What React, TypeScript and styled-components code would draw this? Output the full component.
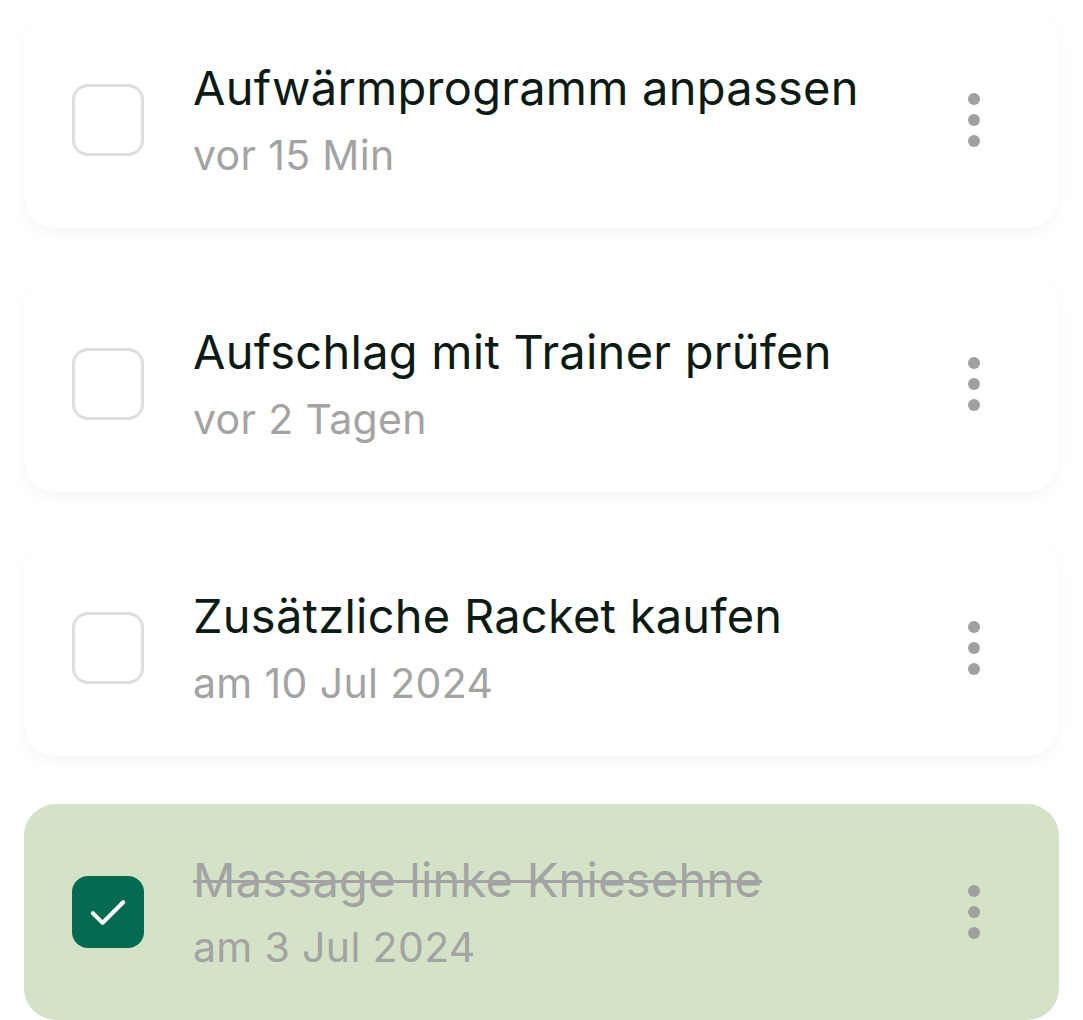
import React from 'react';
import styled, { createGlobalStyle } from 'styled-components';

const GlobalStyle = createGlobalStyle`
  html, body {
    margin: 0;
    padding: 0;
    background: #ffffff;
  }
  body {
    font-family: Inter, "Noto Sans", sans-serif;
  }
`;

const List = styled.div`
  display: flex;
  flex-direction: column;
  gap: 48px;
  padding: 12px 24px 0 24px;
`;

const Card = styled.div<{ done: boolean }>`
  display: flex;
  align-items: center;
  height: 216px;
  box-sizing: border-box;
  padding: 0 48px;
  border-radius: 32px;
  background: ${p => (p.done ? '#d4e2c8' : '#ffffff')};
  box-shadow: ${p => (p.done ? 'none' : '0 6px 16px rgba(0, 0, 0, 0.035)')};
`;

const Box = styled.div<{ checked: boolean }>`
  flex: 0 0 auto;
  width: 72px;
  height: 72px;
  box-sizing: border-box;
  border-radius: 16px;
  border: ${p => (p.checked ? 'none' : '3px solid #dedede')};
  background: ${p => (p.checked ? '#046a50' : 'transparent')};
  display: flex;
  align-items: center;
  justify-content: center;
`;

const Body = styled.div`
  flex: 1;
  margin-left: 49px;
  display: flex;
  flex-direction: column;
  gap: 14px;
`;

const Title = styled.div<{ done: boolean }>`
  font-size: 47px;
  line-height: 56px;
  letter-spacing: 0.25px;
  color: ${p => (p.done ? '#a3a3a3' : '#0b1a12')};
  text-decoration: ${p => (p.done ? 'line-through' : 'none')};
  text-decoration-thickness: 3px;
  white-space: nowrap;
`;

const Meta = styled.div`
  font-size: 41px;
  line-height: 50px;
  letter-spacing: 0.35px;
  color: #a3a3a3;
  white-space: nowrap;
`;

const Menu = styled.div`
  flex: 0 0 auto;
  width: 72px;
  height: 72px;
  display: flex;
  flex-direction: column;
  align-items: center;
  justify-content: center;
  gap: 9px;
  margin-right: 1px;
`;

const Dot = styled.span`
  width: 12px;
  height: 12px;
  border-radius: 50%;
  background: #a0a0a0;
`;

const tasks = [
  { title: 'Aufwärmprogramm anpassen', meta: 'vor 15 Min', done: false },
  { title: 'Aufschlag mit Trainer prüfen', meta: 'vor 2 Tagen', done: false },
  { title: 'Zusätzliche Racket kaufen', meta: 'am 10 Jul 2024', done: false },
  { title: 'Massage linke Kniesehne', meta: 'am 3 Jul 2024', done: true },
];

const Check = () => (
  <svg width="52" height="52" viewBox="0 0 24 24" fill="none">
    <path d="M5 12.5l4.5 4.5L19 7.5" stroke="#ffffff" strokeWidth="1.9" strokeLinecap="round" strokeLinejoin="round" />
  </svg>
);

export default function App() {
  return (
    <>
      <GlobalStyle />
      <List>
        {tasks.map(t => (
          <Card key={t.title} done={t.done}>
            <Box checked={t.done}>{t.done && <Check />}</Box>
            <Body>
              <Title done={t.done}>{t.title}</Title>
              <Meta>{t.meta}</Meta>
            </Body>
            <Menu>
              <Dot />
              <Dot />
              <Dot />
            </Menu>
          </Card>
        ))}
      </List>
    </>
  );
}
